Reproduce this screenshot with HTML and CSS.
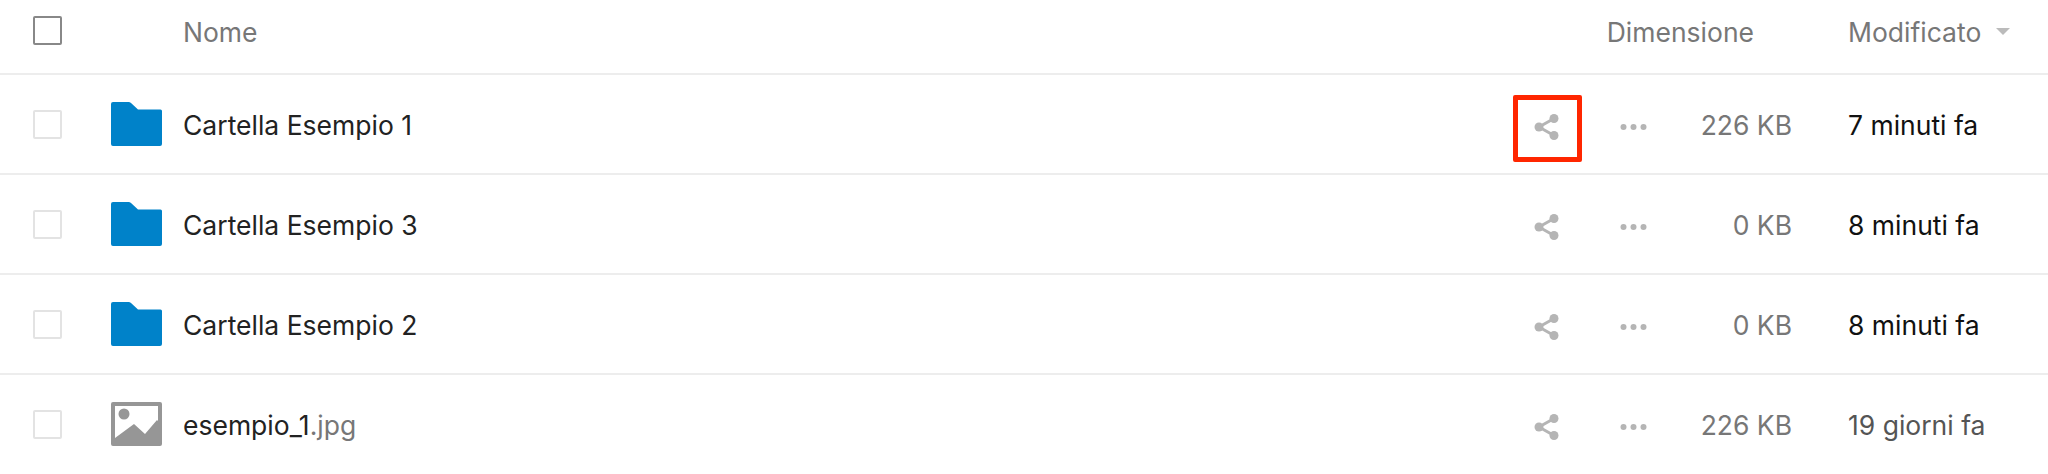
FILE: index.html
```html
<!DOCTYPE html>
<html>
    <head>
        <meta charset="utf-8">
        <title>File</title>
        <link rel="stylesheet" href="styles.css">
    </head>
    <body>
        <svg class="defs" width="0" height="0">
          <symbol id="folder" viewBox="0 0 51 44">
            <path d="M2 0H17.500Q19 0 20 1L27 7.500H49.500Q51 7.500 51 9V42Q51 44 49 44H2Q0 44 0 42V2Q0 0 2 0Z"/>
          </symbol>
          <symbol id="share" viewBox="0 0 26 26">
            <path class="shareLine" d="M20 4.500L5 13L20 21.500"/>
            <circle cx="20" cy="4.500" r="4.500"/>
            <circle cx="5" cy="13" r="4.500"/>
            <circle cx="20" cy="21.500" r="4.500"/>
          </symbol>
          <symbol id="dots" viewBox="0 0 26 6">
            <circle cx="3" cy="3" r="3"/>
            <circle cx="13" cy="3" r="3"/>
            <circle cx="23" cy="3" r="3"/>
          </symbol>
        </svg>

        <div class="fileList">
          <div class="headRow">
            <span class="check checkDark"></span>
            <span class="nameCol headName">Nome</span>
            <span class="sizeHead">Dimensione</span>
            <span class="dateHead">Modificato<i class="sortArrow"></i></span>
          </div>

          <div class="fileRow">
            <span class="check"></span>
            <svg class="fileIcon folderIcon"><use href="#folder"/></svg>
            <span class="nameCol">Cartella Esempio 1</span>
            <span class="shareBtn marked"><svg class="shareIcon"><use href="#share"/></svg></span>
            <svg class="dotsIcon"><use href="#dots"/></svg>
            <span class="size">226 KB</span>
            <span class="date dateNew">7 minuti fa</span>
          </div>

          <div class="fileRow">
            <span class="check"></span>
            <svg class="fileIcon folderIcon"><use href="#folder"/></svg>
            <span class="nameCol">Cartella Esempio 3</span>
            <span class="shareBtn"><svg class="shareIcon"><use href="#share"/></svg></span>
            <svg class="dotsIcon"><use href="#dots"/></svg>
            <span class="size">0 KB</span>
            <span class="date dateNew">8 minuti fa</span>
          </div>

          <div class="fileRow">
            <span class="check"></span>
            <svg class="fileIcon folderIcon"><use href="#folder"/></svg>
            <span class="nameCol">Cartella Esempio 2</span>
            <span class="shareBtn"><svg class="shareIcon"><use href="#share"/></svg></span>
            <svg class="dotsIcon"><use href="#dots"/></svg>
            <span class="size">0 KB</span>
            <span class="date dateNew">8 minuti fa</span>
          </div>

          <div class="fileRow lastRow">
            <span class="check"></span>
            <svg class="fileIcon imageIcon" viewBox="0 0 51 44">
              <path fill-rule="evenodd" d="M2 0H49Q51 0 51 2V42Q51 44 49 44H2Q0 44 0 42V2Q0 0 2 0ZM4 4V36L23 22L34 32L46 18L47 19V4Z"/>
              <circle cx="13" cy="12" r="5.500"/>
            </svg>
            <span class="nameCol">esempio_1<span class="ext">.jpg</span></span>
            <span class="shareBtn"><svg class="shareIcon"><use href="#share"/></svg></span>
            <svg class="dotsIcon"><use href="#dots"/></svg>
            <span class="size">226 KB</span>
            <span class="date dateOld">19 giorni fa</span>
          </div>
        </div>
    </body>
</html>
```

FILE: styles.css
```css
body{
  margin: 0;
  background-color: white;
  font-family: "Inter", "Liberation Sans", sans-serif;
  font-size: 26.5px;
  color: #222;
  overflow: hidden;
}
.defs{
  display: block;
  height: 0;
}
.fileList{
  display: flex;
  flex-direction: column;
}
.headRow, .fileRow{
  display: flex;
  align-items: center;
  padding-left: 33px;
  border-bottom: 2px solid #ededed;
}
.headRow{
  box-sizing: border-box;
  height: 75px;
  padding-bottom: 10px;
  color: #777;
}
.headRow .check{
  margin-bottom: 3px;
}
.fileRow{
  height: 98px;
}
.fileRow > span:not(.check):not(.shareBtn){
  margin-top: 2px;
}
.lastRow{
  border-bottom: none;
}
.check{
  flex: none;
  box-sizing: border-box;
  width: 29px;
  height: 29px;
  border: 2px solid #e3e3e3;
  border-radius: 2px;
}
.checkDark{
  border-color: #888;
}
.fileIcon{
  flex: none;
  width: 51px;
  height: 44px;
  margin-left: 49px;
}
.folderIcon{
  fill: #0082c9;
}
.imageIcon{
  fill: #969696;
}
.nameCol{
  flex: 1;
  margin-left: 21px;
}
.headName{
  margin-left: 121px;
}
.ext{
  color: #777;
}
.shareBtn{
  flex: none;
  box-sizing: border-box;
  display: flex;
  align-items: center;
  justify-content: center;
  width: 69px;
  height: 67px;
  margin-top: 8px;
  border: 5px solid transparent;
  border-radius: 2px;
}
.marked{
  border-color: #ff2600;
}
.shareIcon{
  width: 26px;
  height: 26px;
  margin: -2px 2px 0 0;
  fill: #b5b5b5;
}
.shareLine{
  fill: none;
  stroke: #b5b5b5;
  stroke-width: 3;
}
.dotsIcon{
  flex: none;
  width: 27px;
  height: 6px;
  margin-left: 38px;
  margin-top: 6px;
  fill: #b5b5b5;
}
.size{
  flex: none;
  width: 145px;
  text-align: right;
  color: #777;
}
.date{
  flex: none;
  width: 200px;
  margin-left: 56px;
}
.dateNew{
  color: #111;
}
.dateOld{
  color: #555;
}
.sizeHead{
  flex: none;
  margin-right: 94px;
}
.dateHead{
  flex: none;
  width: 200px;
  display: flex;
  align-items: center;
}
.sortArrow{
  width: 0;
  height: 0;
  margin-left: 15px;
  border-left: 7px solid transparent;
  border-right: 7px solid transparent;
  border-top: 7px solid #bbb;
}
```
